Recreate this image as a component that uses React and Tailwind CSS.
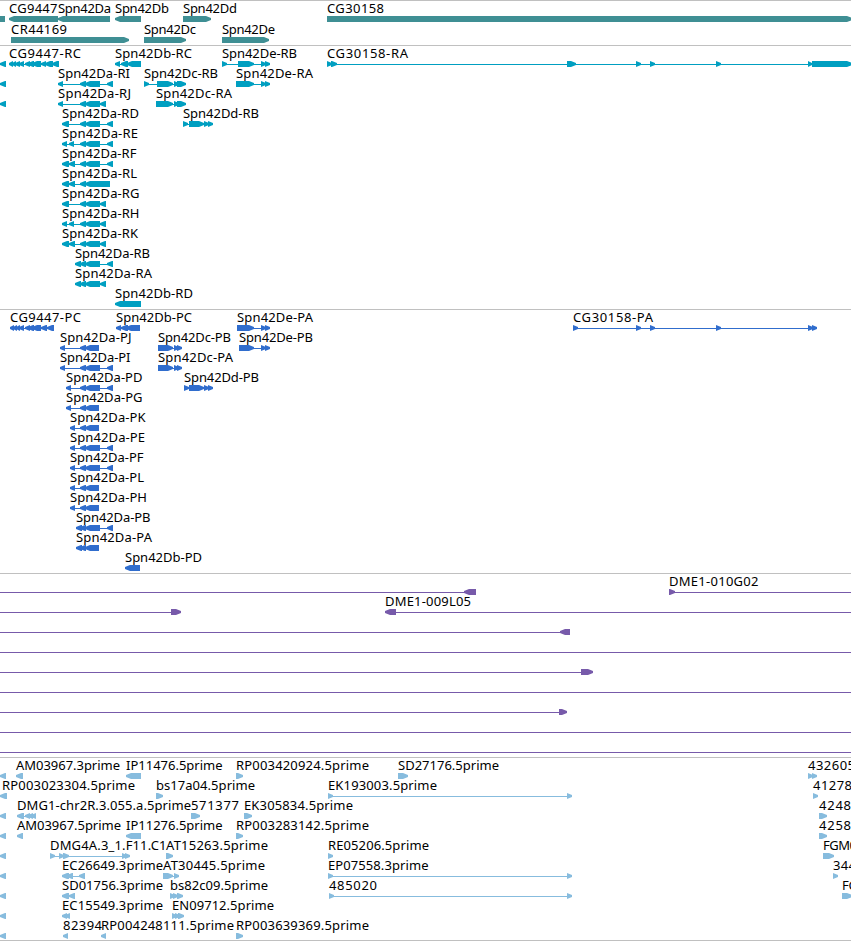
import React from "react";

// feature: [label, x, label end, direction, exons, [line start, line end]]
const L = "left";
const R = "right";
// a feature that starts before the visible window
const edge = () => ["", 0, 0, L, [[0, 6]], [0, 6]];

const genes = [
  [
    ["", 0, 0, "", [[0, 5]]],
    ["CG9447", 9, 57.5, L, [[9, 58]]],
    ["Spn42Da", 58, 111, L, [[58, 110]]],
    ["Spn42Db", 115, 169, L, [[115, 141]]],
    ["Spn42Dd", 183, 237, R, [[183, 211]]],
    ["CG30158", 327, 384, R, [[327, 852]]],
  ],
  [
    ["CR44169", 11, 67, R, [[11, 129]]],
    ["Spn42Dc", 144, 196, R, [[144, 186]]],
    ["Spn42De", 222, 275, R, [[222, 269]]],
  ],
];

const transcripts = [
  [
    edge(),
    ["CG9447-RC", 9, 81, L, [[9, 13], [12, 16], [15, 20], [19, 24], [25, 30], [28, 34], [32, 41], [41, 46], [45, 53], [52, 59]]],
    ["Spn42Db-RC", 115, 192, L, [[115, 120], [121, 128], [127, 141]]],
    ["Spn42De-RB", 222, 297, R, [[222, 227], [238, 254], [261, 266], [265, 270]]],
    ["CG30158-RA", 327, 408, R, [[327, 332], [331, 337], [567, 576], [636, 641], [650, 655], [716, 721], [808, 812], [812, 852]]],
  ],
  [
    edge(),
    ["Spn42Da-RI", 58, 130, L, [[58, 63], [80, 86], [85, 100], [107, 113]]],
    ["Spn42Dc-RB", 144, 218, R, [[144, 149], [157, 173], [174, 179], [177, 186]]],
    ["Spn42De-RA", 236, 313, R, [[236, 254], [261, 266], [265, 270]]],
  ],
  [
    edge(),
    ["Spn42Da-RJ", 58, 131, L, [[58, 63], [80, 86], [85, 100], [100, 106]]],
    ["Spn42Dc-RA", 156, 232, R, [[156, 173], [174, 179], [177, 186]]],
  ],
  [
    ["Spn42Da-RD", 62, 139, L, [[62, 69], [80, 86], [85, 100], [107, 113]]],
    ["Spn42Dd-RB", 183, 259, R, [[183, 188], [189, 204], [204, 209], [208, 213]]],
  ],
  [["Spn42Da-RE", 62, 138, L, [[62, 67], [69, 74], [80, 86], [85, 100], [107, 113]]]],
  [["Spn42Da-RF", 62, 136.5, L, [[62, 69], [69, 75], [80, 86], [85, 100], [107, 113]]]],
  [["Spn42Da-RL", 62, 137, L, [[62, 69], [69, 75], [80, 86], [85, 110]]]],
  [["Spn42Da-RG", 62, 139.5, L, [[62, 69], [80, 86], [85, 100], [100, 106]]]],
  [["Spn42Da-RH", 62, 139.5, L, [[62, 67], [69, 74], [80, 86], [85, 100], [100, 106]]]],
  [["Spn42Da-RK", 62, 138, L, [[62, 69], [69, 75], [80, 86], [85, 100], [100, 106]]]],
  [["Spn42Da-RB", 75, 150, L, [[75, 81], [80, 86], [85, 100], [107, 113]]]],
  [["Spn42Da-RA", 75, 152, L, [[75, 81], [80, 86], [85, 100], [100, 106]]]],
  [["Spn42Db-RD", 115, 193, L, [[115, 141]]]],
];

const proteins = [
  [
    ["CG9447-PC", 10, 81, L, [[10, 14], [13, 17], [16, 20], [19, 24], [25, 30], [28, 34], [32, 41], [41, 47], [47, 54]]],
    ["Spn42Db-PC", 116, 192, L, [[116, 121], [121, 128], [126, 140]]],
    ["Spn42De-PA", 237, 313, R, [[237, 254], [261, 266], [265, 270]]],
    ["CG30158-PA", 573, 653, R, [[573, 578], [636, 641], [650, 655], [716, 721], [808, 813], [812, 817]]],
  ],
  [
    ["Spn42Da-PJ", 60, 131.5, L, [[60, 65], [80, 86], [85, 99]]],
    ["Spn42Dc-PB", 158, 231, R, [[158, 173], [174, 179], [177, 182]]],
    ["Spn42De-PB", 239, 313, R, [[239, 254], [261, 266], [265, 270]]],
  ],
  [
    ["Spn42Da-PI", 60, 130.5, L, [[60, 65], [80, 86], [85, 100], [107, 113]]],
    ["Spn42Dc-PA", 158, 233, R, [[158, 173], [174, 179], [177, 182]]],
  ],
  [
    ["Spn42Da-PD", 66, 142.5, L, [[66, 71], [80, 86], [85, 100], [107, 113]]],
    ["Spn42Dd-PB", 184, 259, R, [[184, 189], [189, 204], [204, 209], [208, 213]]],
  ],
  [["Spn42Da-PG", 66, 142.5, L, [[66, 71], [80, 86], [85, 99]]]],
  [["Spn42Da-PK", 70, 145.5, L, [[70, 75], [80, 86], [85, 99]]]],
  [["Spn42Da-PE", 70, 145, L, [[70, 75], [80, 86], [85, 100], [107, 113]]]],
  [["Spn42Da-PF", 70, 143.5, L, [[70, 75], [80, 86], [85, 100], [107, 113]]]],
  [["Spn42Da-PL", 70, 144, L, [[70, 75], [80, 86], [85, 99]]]],
  [["Spn42Da-PH", 70, 147, L, [[70, 75], [80, 86], [85, 99]]]],
  [["Spn42Da-PB", 76, 150.5, L, [[76, 82], [80, 86], [85, 100], [107, 113]]]],
  [["Spn42Da-PA", 76, 152, L, [[76, 82], [80, 86], [85, 99]]]],
  [["Spn42Db-PD", 125, 202, L, [[125, 140]]]],
];

const clones = [
  [
    ["", 0, 0, L, [[464, 476]], [0, 476]],
    ["DME1-010G02", 669, 758.5, R, [[669, 675]], [669, 851]],
  ],
  [
    ["", 0, 0, R, [[171, 181]], [0, 181]],
    ["DME1-009L05", 385, 471, L, [[385, 396]], [385, 851]],
  ],
  [["", 0, 0, L, [[560, 570]], [0, 570]]],
  [["", 0, 0, L, [], [0, 851]]],
  [["", 0, 0, R, [[581, 593]], [0, 593]]],
  [["", 0, 0, L, [], [0, 851]]],
  [["", 0, 0, R, [[559, 567]], [0, 567]]],
  [["", 0, 0, L, [], [0, 851]]],
  [["", 0, 0, L, [], [0, 851]]],
];

const ests = [
  [
    edge(),
    ["AM03967.3prime", 16, 120, L, [[16, 23]]],
    ["IP11476.5prime", 126, 222.5, L, [[126, 141]]],
    ["RP003420924.5prime", 236, 369, R, [[236, 243]]],
    ["SD27176.5prime", 398, 499, R, [[398, 408]]],
    ["432605", 808, 855, R, [[808, 813], [812, 817]]],
  ],
  [
    ["RP003023304.5prime", 2, 135, L, [[0, 7]], [0, 7]],
    ["bs17a04.5prime", 156, 255, R, [[156, 163]]],
    ["EK193003.5prime", 328, 437, R, [[328, 333], [567, 572]]],
    ["41278", 813, 852, R, [[813, 818]]],
  ],
  [
    edge(),
    ["DMG1-chr2R.3.055.a.5prime", 17, 191, L, [[17, 24], [25, 30], [28, 33], [31, 36]]],
    ["571377", 191, 239, R, [[191, 200]]],
    ["EK305834.5prime", 244, 353, R, [[244, 252]]],
    ["4248", 819, 851, R, [[819, 827]]],
  ],
  [
    edge(),
    ["AM03967.5prime", 17, 121, L, [[17, 23]]],
    ["IP11276.5prime", 126, 222.5, L, [[126, 141]]],
    ["RP003283142.5prime", 236, 369, R, [[236, 243]]],
    ["4258", 819, 851, R, [[819, 827]]],
  ],
  [
    edge(),
    ["DMG4A.3_1.F11.C1", 50, 166.5, R, [[50, 55], [59, 64], [63, 69], [122, 127], [125, 130]]],
    ["AT15263.5prime", 166, 268, R, [[166, 173]]],
    ["RE05206.5prime", 328, 429, R, [[328, 333]]],
    ["FGM0", 823, 857, R, [[823, 834]]],
  ],
  [
    edge(),
    ["EC26649.3prime", 62, 163, L, [[62, 69], [67, 73], [79, 85]]],
    ["AT30445.5prime", 163, 265, R, [[163, 173], [174, 179]]],
    ["EP07558.3prime", 328, 428.5, R, [[328, 333], [567, 572]]],
    ["344", 833, 856, R, [[833, 838]]],
  ],
  [
    edge(),
    ["SD01756.3prime", 62, 163, L, [[62, 69], [69, 75]]],
    ["bs82c09.5prime", 170, 268, R, [[170, 175], [173, 178], [177, 183]]],
    ["485020", 329, 377, R, [[329, 334], [567, 572]]],
    ["FG", 842, 858, R, [[842, 852]]],
  ],
  [
    edge(),
    ["EC15549.3prime", 62, 163, L, [[62, 67], [65, 70]]],
    ["EN09712.5prime", 172, 274, R, [[172, 177], [175, 180], [178, 184]]],
  ],
  [
    edge(),
    ["82394", 63, 102, L, [[63, 68]]],
    ["RP004248111.5prime", 101, 234, L, [[101, 106]]],
    ["RP003639369.5prime", 236, 369, R, [[236, 243]]],
  ],
];

const Exon = ({ a, b, dir }) => {
  const h = Math.min(5, b - a);
  if (dir === L) return <polygon points={`${a},17 ${a + h},15 ${b},15 ${b},21 ${a + h},21 ${a},19`} />;
  if (dir === R) return <polygon points={`${a},15 ${b - h},15 ${b},17 ${b},19 ${b - h},21 ${a},21`} />;
  return <rect x={a} y="15" width={b - a} height="6" />;
};

const Feature = ({ data }) => {
  const [label, x, end, dir, exons, line] = data;
  const [from, to] = line || [exons[0][0] + 1, exons[exons.length - 1][1] - 1];
  return (
    <g>
      {label && (
        <text x={x} y="12" textLength={end - x} className="fill-black">
          {label}
        </text>
      )}
      {(line || exons.length > 1) && <rect x={from} y="18" width={to - from} height="1" />}
      {exons.map(([a, b]) => (
        <Exon key={a} a={a} b={b} dir={dir} />
      ))}
    </g>
  );
};

const Track = ({ rows, className, rowClass = "h-5" }) => (
  <section className={`flex flex-col border-t border-[#c0c0c0] ${className}`}>
    {rows.map((row, i) => (
      <svg key={i} className={`block w-full shrink-0 overflow-visible fill-current text-[13px] ${rowClass}`}>
        {row.map((f, j) => (
          <Feature key={j} data={f} />
        ))}
      </svg>
    ))}
  </section>
);

const App = () => {
  return (
    <main className="flex h-[941px] w-[851px] flex-col overflow-hidden border-b border-[#c0c0c0] bg-white font-['Noto_Sans','DejaVu_Sans',sans-serif]">
      <Track rows={genes} rowClass="h-[21px]" className="pb-0.5 text-[#3f8f94]" />
      <Track rows={transcripts} className="pb-[3px] text-[#009fc1]" />
      <Track rows={proteins} className="pb-[3px] text-[#306dcd]" />
      <Track rows={clones} className="pb-[3px] text-[#775aaa]" />
      <Track rows={ests} className="pb-0.5 text-[#87bcde]" />
    </main>
  );
};

export default App;
